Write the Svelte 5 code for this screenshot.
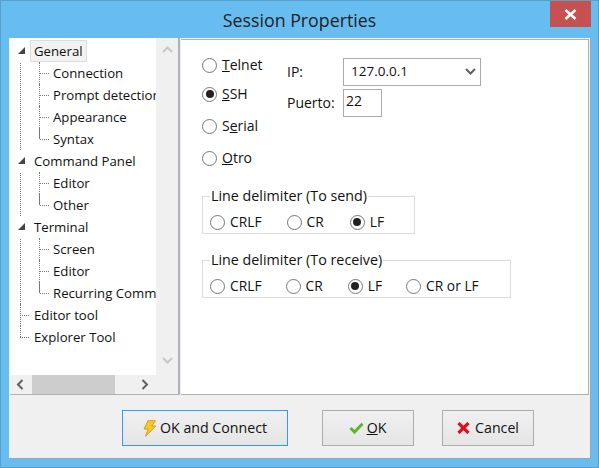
<script>
  const tree = [
    { label: 'General', selected: true, children: ['Connection', 'Prompt detection', 'Appearance', 'Syntax'] },
    { label: 'Command Panel', children: ['Editor', 'Other'] },
    { label: 'Terminal', children: ['Screen', 'Editor', 'Recurring Command'] },
    { label: 'Editor tool', leaf: true },
    { label: 'Explorer Tool', leaf: true }
  ];

  let conn = 'ssh';
  let ip = '127.0.0.1';
  let port = '22';
  let sendDelim = 'LF';
  let recvDelim = 'LF';
</script>

<div class="window">
  <div class="titlebar">
    <span class="title">Session Properties</span>
    <button class="close" aria-label="Close">
      <svg width="13" height="11" viewBox="0 0 13 11"><path d="M1.5 1 L11.5 10 M11.5 1 L1.5 10" stroke="#fff" stroke-width="2.6" /></svg>
    </button>
  </div>

  <div class="client">
    <div class="main">
      <div class="tree-panel">
        <div class="tree-row">
          <div class="tree">
            {#each tree as node}
              <div class="node" class:leaf={node.leaf}>
                {#if node.leaf}
                  <span class="leaf-dash"></span>
                {:else}
                  <svg class="expander" width="9" height="9" viewBox="0 0 9 9"><path d="M8 1 V8 H1 Z" fill="#444" /></svg>
                {/if}
                <span class="node-label" class:selected={node.selected}>{node.label}</span>
              </div>
              {#if node.children}
                <div class="children">
                  {#each node.children as child}
                    <div class="child"><span class="dash"></span><span class="child-label">{child}</span></div>
                  {/each}
                </div>
              {/if}
            {/each}
          </div>
          <div class="vscroll">
            <svg width="11" height="7" viewBox="0 0 11 7"><path d="M1 6 L5.5 1.5 L10 6" fill="none" stroke="#c8c8c8" stroke-width="2" /></svg>
            <svg width="11" height="7" viewBox="0 0 11 7"><path d="M1 1 L5.5 5.5 L10 1" fill="none" stroke="#c8c8c8" stroke-width="2" /></svg>
          </div>
        </div>
        <div class="hscroll">
          <svg class="arrow" width="8" height="11" viewBox="0 0 8 11"><path d="M6.5 1 L2 5.5 L6.5 10" fill="none" stroke="#606060" stroke-width="2" /></svg>
          <div class="track"><div class="thumb"></div></div>
          <svg class="arrow" width="8" height="11" viewBox="0 0 8 11"><path d="M1.5 1 L6 5.5 L1.5 10" fill="none" stroke="#606060" stroke-width="2" /></svg>
        </div>
      </div>

      <div class="page">
        <div class="conn">
          <div class="conn-types">
            <label class="radio telnet"><input type="radio" bind:group={conn} value="telnet" /><span><u>T</u>elnet</span></label>
            <label class="radio"><input type="radio" bind:group={conn} value="ssh" /><span><u>S</u>SH</span></label>
            <label class="radio"><input type="radio" bind:group={conn} value="serial" /><span>S<u>e</u>rial</span></label>
            <label class="radio"><input type="radio" bind:group={conn} value="otro" /><span><u>O</u>tro</span></label>
          </div>
          <div class="conn-fields">
            <div class="field">
              <span class="field-label">IP:</span>
              <div class="combo">
                <span>{ip}</span>
                <svg width="11" height="7" viewBox="0 0 11 7"><path d="M1 1 L5.5 5.5 L10 1" fill="none" stroke="#606060" stroke-width="2" /></svg>
              </div>
            </div>
            <div class="field port">
              <span class="field-label">Puerto:</span>
              <input class="port-input" bind:value={port} />
            </div>
          </div>
        </div>

        <fieldset class="group send">
          <legend>Line delimiter (To send)</legend>
          <label class="radio crlf"><input type="radio" bind:group={sendDelim} value="CRLF" /><span>CRLF</span></label>
          <label class="radio cr"><input type="radio" bind:group={sendDelim} value="CR" /><span>CR</span></label>
          <label class="radio"><input type="radio" bind:group={sendDelim} value="LF" /><span>LF</span></label>
        </fieldset>

        <fieldset class="group recv">
          <legend>Line delimiter (To receive)</legend>
          <label class="radio crlf"><input type="radio" bind:group={recvDelim} value="CRLF" /><span>CRLF</span></label>
          <label class="radio cr2"><input type="radio" bind:group={recvDelim} value="CR" /><span>CR</span></label>
          <label class="radio lf2"><input type="radio" bind:group={recvDelim} value="LF" /><span>LF</span></label>
          <label class="radio"><input type="radio" bind:group={recvDelim} value="CR or LF" /><span>CR or LF</span></label>
        </fieldset>
      </div>
    </div>

    <div class="footer">
      <button class="btn connect">
        <svg width="15" height="17" viewBox="0 0 15 17">
          <path d="M6 0.7 H13.5 L9.7 6 H13.8 L3.6 16.3 L6.2 9 H2 Z" fill="#f8c828" stroke="#d89a20" stroke-width="1" stroke-linejoin="round" />
        </svg>
        OK and Connect
      </button>
      <button class="btn ok">
        <svg width="15" height="12" viewBox="0 0 15 12"><path d="M1.5 6 L5.5 10 L13.5 1.8" fill="none" stroke="#5cb531" stroke-width="3" /></svg>
        <span><u>O</u>K</span>
      </button>
      <button class="btn cancel">
        <svg width="13" height="12" viewBox="0 0 13 12"><path d="M1.5 1 L11.5 11 M11.5 1 L1.5 11" stroke="#d8121f" stroke-width="3.2" /></svg>
        Cancel
      </button>
    </div>
  </div>
</div>

<style>
  :global(body) {
    margin: 0;
    background: #67bdf0;
  }

  .window {
    width: 599px;
    height: 468px;
    box-sizing: border-box;
    background: #67bdf0;
    border: 1px solid #5a9fc8;
    display: flex;
    flex-direction: column;
    font-family: "Open Sans", "Noto Sans", sans-serif;
    font-size: 14px;
    color: #111;
    overflow: hidden;
  }

  .titlebar {
    height: 37px;
    flex: none;
    position: relative;
    display: flex;
    justify-content: center;
    padding-top: 7px;
    box-sizing: border-box;
  }

  .title {
    font-size: 17.8px;
    line-height: 24px;
    color: #222;
  }

  .close {
    position: absolute;
    top: 0;
    right: 7px;
    width: 41px;
    height: 26px;
    border: none;
    padding: 0;
    background: #c75050;
    display: flex;
    align-items: center;
    justify-content: center;
  }

  .client {
    flex: 1;
    margin: 0 8px 9px 8px;
    background: #f0f0f0;
    display: flex;
    flex-direction: column;
    box-shadow: 1px 1px 0 #a0a4a8;
  }

  .main {
    display: flex;
    height: 357px;
    flex: none;
    box-sizing: border-box;
    padding-left: 1px;
  }

  .tree-panel {
    width: 170px;
    flex: none;
    box-sizing: border-box;
    background: #fff;
    border-right: 2px solid #b0b0b8;
    border-bottom: 1px solid #b0b0b8;
    display: flex;
    flex-direction: column;
    overflow: hidden;
  }

  .tree-row {
    flex: 1;
    display: flex;
    min-height: 0;
  }

  .tree {
    flex: 1;
    min-width: 0;
    overflow: hidden;
    white-space: nowrap;
    padding-top: 2px;
    font-size: 13.2px;
  }

  .node {
    height: 22px;
    display: flex;
    align-items: center;
    padding-left: 7px;
  }

  .node.leaf {
    padding-left: 10px;
    position: relative;
  }

  .node.leaf::before {
    content: "";
    position: absolute;
    left: 10px;
    top: 0;
    height: 100%;
    border-left: 1px dotted #777;
  }

  .node.leaf:last-child::before {
    height: 50%;
  }

  .expander {
    flex: none;
    margin-top: -1px;
  }

  .leaf-dash {
    width: 9px;
    flex: none;
    border-top: 1px dotted #777;
  }

  .node-label {
    margin-left: 4px;
    padding: 1px 3px;
    line-height: 18px;
    border: 1px solid transparent;
  }

  .node.leaf .node-label {
    margin-left: 1px;
  }

  .node-label.selected {
    background: #f2f2f2;
    border-color: #dcdcdc;
  }

  .children {
    margin-left: 29px;
    position: relative;
  }

  .children::before {
    content: "";
    position: absolute;
    left: -19px;
    top: 1px;
    bottom: 0;
    border-left: 1px dotted #777;
  }

  .child {
    height: 22px;
    display: flex;
    align-items: center;
    border-left: 1px dotted #777;
    margin-top: 0;
  }

  .child:last-child {
    border-image: linear-gradient(#777 50%, transparent 50%) 1;
  }

  .dash {
    width: 9px;
    flex: none;
    border-top: 1px dotted #777;
  }

  .child-label {
    margin-left: 4px;
    line-height: 18px;
  }

  .vscroll {
    width: 22px;
    flex: none;
    background: #f0f0f0;
    display: flex;
    flex-direction: column;
    justify-content: space-between;
    align-items: center;
    padding: 8px 0 11px;
    box-sizing: border-box;
  }

  .hscroll {
    height: 19px;
    flex: none;
    background: #f0f0f0;
    display: flex;
    align-items: center;
    margin-right: 0;
  }

  .arrow {
    flex: none;
    margin: 0 8px 0 6px;
  }

  .track {
    flex: none;
    width: 103px;
    height: 19px;
  }

  .thumb {
    width: 83px;
    height: 19px;
    background: #cdcdcd;
  }

  .page {
    flex: 1;
    background: #fff;
    border: 1px solid #b0b0b0;
    border-left: none;
    margin-top: 1px;
    padding: 14px 0 0 21px;
    box-sizing: border-box;
    margin-left: 1px;
    margin-right: 1px;
  }

  .conn {
    display: flex;
    height: 133px;
  }

  .conn-types {
    width: 85px;
    flex: none;
    display: flex;
    flex-direction: column;
  }

  .radio {
    display: inline-flex;
    align-items: center;
    gap: 5px;
    line-height: 18px;
  }

  .conn-types .radio {
    height: 22px;
    margin-top: 10px;
  }

  .conn-types .telnet {
    margin-top: 0;
  }

  .conn-types .radio + .radio + .radio {
    margin-top: 10px;
  }

  .conn-types .telnet + .radio {
    margin-top: 7px;
  }

  input[type="radio"] {
    appearance: none;
    width: 15px;
    height: 15px;
    margin: 0;
    border: 1px solid #777;
    border-radius: 50%;
    background: #fff;
    flex: none;
    position: relative;
  }

  input[type="radio"]:checked::after {
    content: "";
    position: absolute;
    left: 2.5px;
    top: 2.5px;
    width: 8px;
    height: 8px;
    border-radius: 50%;
    background: #222;
  }

  .conn-fields {
    padding-top: 4px;
  }

  .field {
    display: flex;
    align-items: center;
    height: 27px;
  }

  .field.port {
    margin-top: 4px;
  }

  .field-label {
    width: 56px;
    flex: none;
  }

  .combo {
    width: 138px;
    height: 28px;
    box-sizing: border-box;
    border: 1px solid #ababab;
    display: flex;
    align-items: center;
    justify-content: space-between;
    padding: 0 4px 2px 7px;
    font-size: 13.5px;
  }

  .combo svg {
    margin-top: 2px;
  }

  .port-input {
    width: 39px;
    height: 28px;
    box-sizing: border-box;
    border: 1px solid #ababab;
    padding: 0 2px 4px 2px;
    font: inherit;
    color: inherit;
    outline: none;
  }

  .group {
    border: 1px solid #dcdcdc;
    margin: 0;
    padding: 6px 0 0 7px;
    box-sizing: border-box;
    display: flex;
    align-items: center;
    height: 47px;
    min-width: 0;
  }

  .group legend {
    padding: 0 1px;
    margin-left: 0;
    line-height: 18px;
    font-size: 14.3px;
  }

  .group .radio span {
    font-size: 13.8px;
  }

  .send {
    width: 213px;
  }

  .recv {
    width: 309px;
    margin-top: 17px;
  }

  .send .crlf {
    margin-right: 25px;
  }

  .send .cr {
    margin-right: 26px;
  }

  .recv .crlf {
    margin-right: 24px;
  }

  .cr2 {
    margin-right: 25px;
  }

  .lf2 {
    margin-right: 24px;
  }

  .footer {
    flex: 1;
    display: flex;
    align-items: flex-start;
    padding: 15px 0 0 113px;
    box-sizing: border-box;
  }

  .btn {
    height: 36px;
    box-sizing: border-box;
    border: 1px solid #acacac;
    background: linear-gradient(#f0f0f0, #e5e5e5);
    font: inherit;
    font-size: 14.2px;
    color: inherit;
    display: flex;
    align-items: center;
    justify-content: center;
    gap: 3px;
    padding: 0 1px 2px 0;
  }

  .btn svg {
    margin-top: 2px;
  }

  .connect {
    width: 166px;
    border-color: #3399ff;
    margin-right: 34px;
  }

  .ok {
    width: 92px;
    margin-right: 28px;
  }

  .cancel {
    width: 92px;
    gap: 5px;
    padding-left: 1px;
  }
</style>
